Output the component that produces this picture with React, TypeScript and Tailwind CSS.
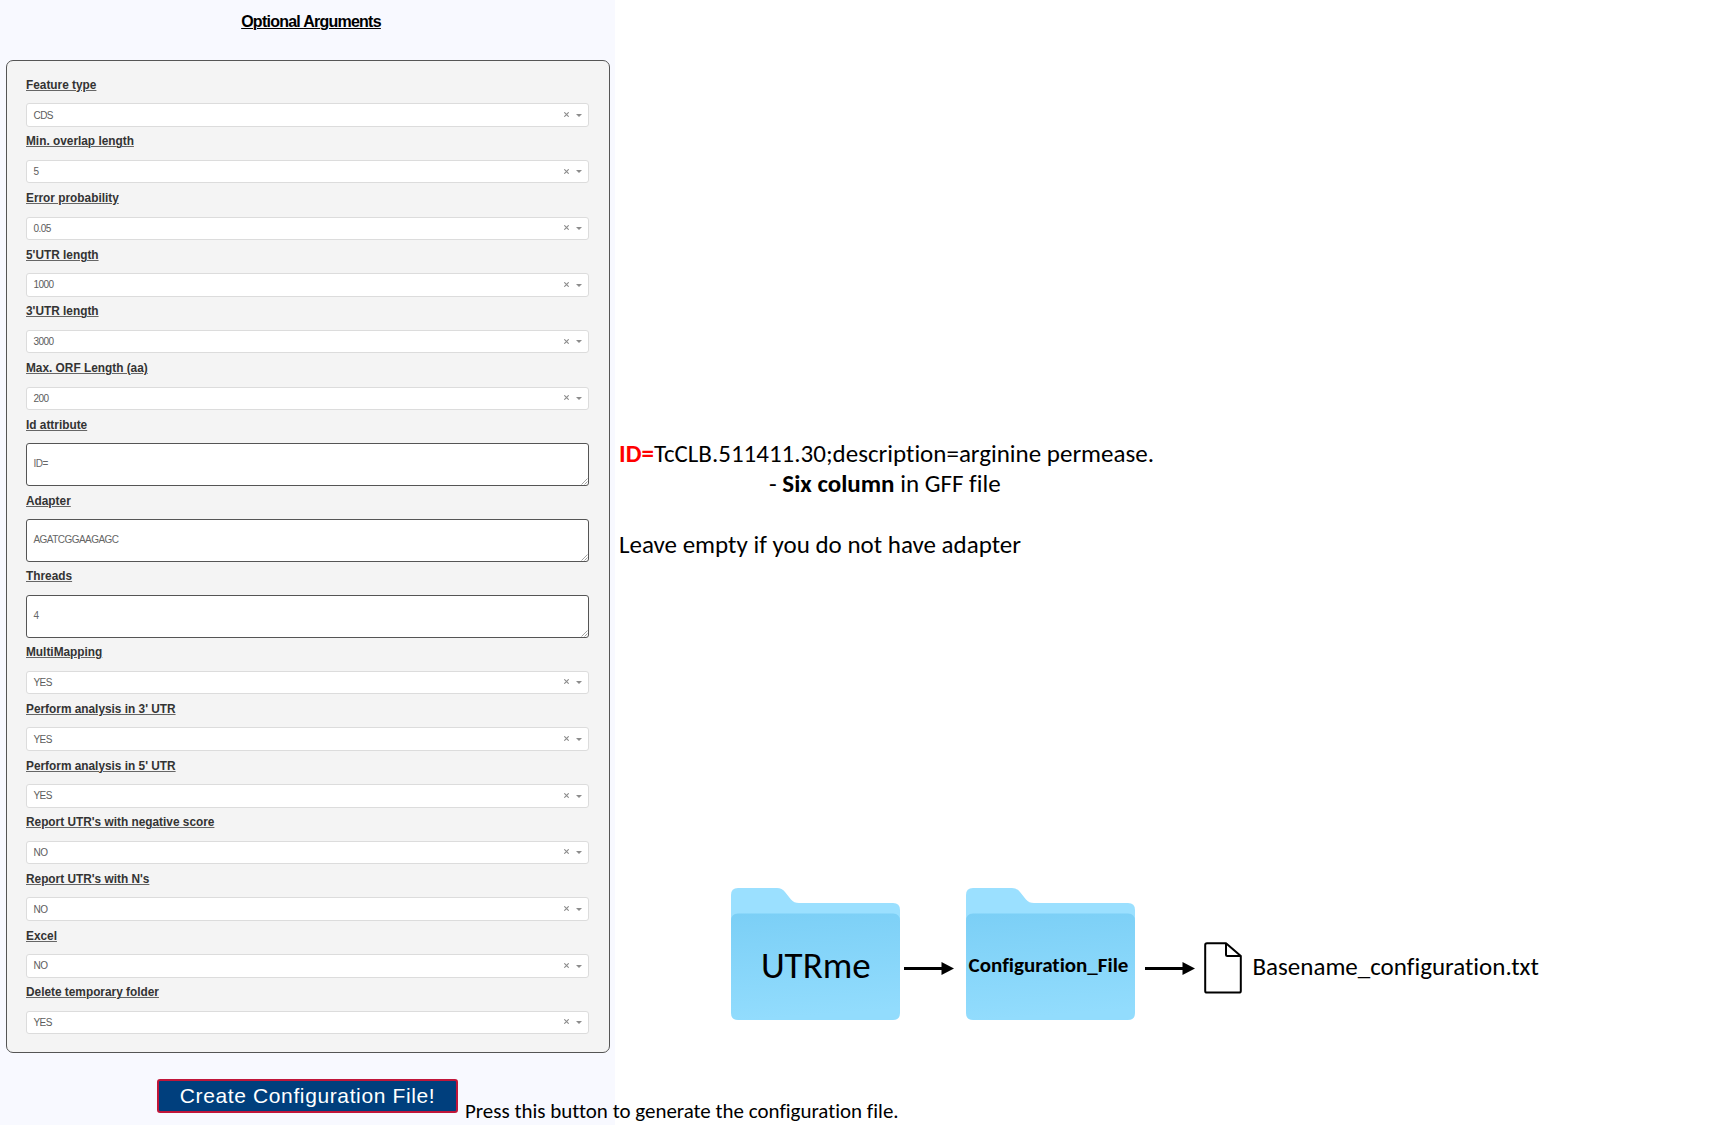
import React from "react";

type FieldSpec = { label: string; value: string; kind: "select" | "area" };

const fields: FieldSpec[] = [
  { label: "Feature type", value: "CDS", kind: "select" },
  { label: "Min. overlap length", value: "5", kind: "select" },
  { label: "Error probability", value: "0.05", kind: "select" },
  { label: "5'UTR length", value: "1000", kind: "select" },
  { label: "3'UTR length", value: "3000", kind: "select" },
  { label: "Max. ORF Length (aa)", value: "200", kind: "select" },
  { label: "Id attribute", value: "ID=", kind: "area" },
  { label: "Adapter", value: "AGATCGGAAGAGC", kind: "area" },
  { label: "Threads", value: "4", kind: "area" },
  { label: "MultiMapping", value: "YES", kind: "select" },
  { label: "Perform analysis in 3' UTR", value: "YES", kind: "select" },
  { label: "Perform analysis in 5' UTR", value: "YES", kind: "select" },
  { label: "Report UTR's with negative score", value: "NO", kind: "select" },
  { label: "Report UTR's with N's", value: "NO", kind: "select" },
  { label: "Excel", value: "NO", kind: "select" },
  { label: "Delete temporary folder", value: "YES", kind: "select" },
];

function SelectBox({ value }: { value: string }) {
  return (
    <div className="flex h-[23.5px] items-center rounded-[3px] border border-[#dcdcdc] bg-white pr-[6px] pl-[6.5px] text-[10px] leading-none tracking-[-0.55px] text-[#5c5c5c]">
      <span className="grow pt-[1px]">{value}</span>
      <svg className="mr-[7px] mb-[1px] h-[5px] w-[5px]" viewBox="0 0 5 5">
        <path d="M0.3 0.3 4.7 4.7M4.7 0.3 0.3 4.7" stroke="#8c8c8c" strokeWidth="1.1" />
      </svg>
      <svg className="mt-[0.5px] h-[3px] w-[6px]" viewBox="0 0 6 3">
        <path d="M0 0H6L3 3Z" fill="#8c8c8c" />
      </svg>
    </div>
  );
}

function AreaBox({ value }: { value: string }) {
  return (
    <div className="flex h-[42.7px] items-end rounded-[3px] border border-[#555] bg-white pl-[6.5px] text-[10px] leading-none tracking-[-0.55px] text-[#666]">
      <span className="grow self-center pb-[0.5px]">{value}</span>
      <svg className="h-[7px] w-[7px]" viewBox="0 0 7 7">
        <path d="M0.5 6.5 6.5 0.5M3.5 6.5 6.5 3.5" stroke="#8a8a8a" strokeWidth="0.8" />
      </svg>
    </div>
  );
}

function Field({ label, value, kind }: FieldSpec) {
  return (
    <div>
      <div className="flex h-[33.17px] pt-[6.7px] text-[11.85px] leading-4 font-bold text-[#333]">
        <span className="underline decoration-[#666] decoration-1 underline-offset-[1px]">
          {label}
        </span>
      </div>
      {kind === "select" ? <SelectBox value={value} /> : <AreaBox value={value} />}
    </div>
  );
}

function Folder({ id, children }: { id: string; children: React.ReactNode }) {
  return (
    <div className="grid h-[132px] w-[169px] shrink-0 place-items-center">
      <svg className="col-start-1 row-start-1 h-[132px] w-[169px]" viewBox="0 0 169 132">
        <defs>
          <linearGradient id={id} x1="0" y1="0" x2="0.12" y2="1">
            <stop offset="0" stopColor="#7bcff6" />
            <stop offset="1" stopColor="#92dcfd" />
          </linearGradient>
        </defs>
        <path
          d="M0 7Q0 0 7 0H46Q51 0 54 4L60 11.500Q63 15 68 15H162Q169 15 169 22V60H0Z"
          fill="#9be0ff"
        />
        <path
          d="M0 33Q0 25.500 7 25.500H162Q169 25.500 169 33V125Q169 132 162 132H7Q0 132 0 125Z"
          fill={`url(#${id})`}
        />
      </svg>
      <div className="col-start-1 row-start-1 pt-[24px] whitespace-nowrap">{children}</div>
    </div>
  );
}

function Arrow() {
  return (
    <svg className="h-[13px] w-[50px] shrink-0" viewBox="0 0 50 13">
      <path d="M0 5H37.500V0L50 6.500L37.500 13V8H0Z" fill="#000" />
    </svg>
  );
}

function FileIcon() {
  return (
    <svg className="h-[52px] w-[38px] shrink-0" viewBox="0 0 38 52">
      <path
        d="M3 1.200H22L36.800 14V49Q36.800 50.600 35 50.600H3Q1.200 50.600 1.200 49V3Q1.200 1.200 3 1.200ZM22 1.200V12.500Q22 14 23.500 14H36.800"
        fill="none"
        stroke="#000"
        strokeWidth="2"
        strokeLinejoin="round"
      />
    </svg>
  );
}

export default function App() {
  return (
    <div className="flex h-[1136px] w-[1720px] overflow-hidden bg-white font-['Liberation_Sans',sans-serif] [font-variant-ligatures:none]">
      <section className="h-[1125px] w-[615px] shrink-0 bg-[#f8f9ff] pt-[13px] pl-[6px]">
        <h1 className="h-[47px] w-[610px] text-center text-[16px] leading-[18px] font-bold tracking-[-0.75px] text-black underline decoration-1 underline-offset-1">
          Optional Arguments
        </h1>
        <div className="h-[993px] w-[604px] rounded-[7px] border border-[#555] bg-[#f4f4f4] pt-[9.1px] pr-[20px] pl-[19px]">
          {fields.map((f) => (
            <Field key={f.label} {...f} />
          ))}
        </div>
        <div className="mt-[26px] ml-[151px] flex">
          <button className="h-[34px] w-[301px] shrink-0 rounded-[3px] border-2 border-[#c0163a] bg-[#003f7d] text-[21px] leading-[30px] tracking-[0.62px] whitespace-nowrap text-white">
            Create Configuration File!
          </button>
          <p className="mt-[20px] ml-[7px] font-[Carlito,Lato,sans-serif] text-[20.97px] leading-6 whitespace-nowrap text-black">
            Press this button to generate the configuration file.
          </p>
        </div>
      </section>

      <section className="grow pl-[4px] font-[Carlito,Lato,sans-serif] text-black">
        <div className="h-[450px] pt-[438.5px] text-[25px] leading-[30.4px] whitespace-nowrap">
          <p>
            <b className="text-[#ff0000]">ID=</b>TcCLB.511411.30;description=arginine permease.
          </p>
          <p className="pl-[150px]">
            - <b>Six column</b> in GFF file
          </p>
          <p className="mt-[30.4px]">Leave empty if you do not have adapter</p>
        </div>
        <div className="mt-[438px] ml-[112.3px] flex h-[132px] items-center">
          <Folder id="folder-root">
            <span className="text-[37px] leading-10">UTRme</span>
          </Folder>
          <div className="mt-[29px] mr-[12px] ml-[3.7px] flex">
            <Arrow />
          </div>
          <Folder id="folder-config">
            <span className="mr-[4px] text-[21px] leading-6 font-bold">Configuration_File</span>
          </Folder>
          <div className="mt-[29px] mr-[9px] ml-[10px] flex">
            <Arrow />
          </div>
          <div className="mt-[27px] flex">
            <FileIcon />
          </div>
          <span className="mt-[25px] ml-[10.5px] text-[25px] leading-[30px]">
            Basename_configuration.txt
          </span>
        </div>
      </section>
    </div>
  );
}
